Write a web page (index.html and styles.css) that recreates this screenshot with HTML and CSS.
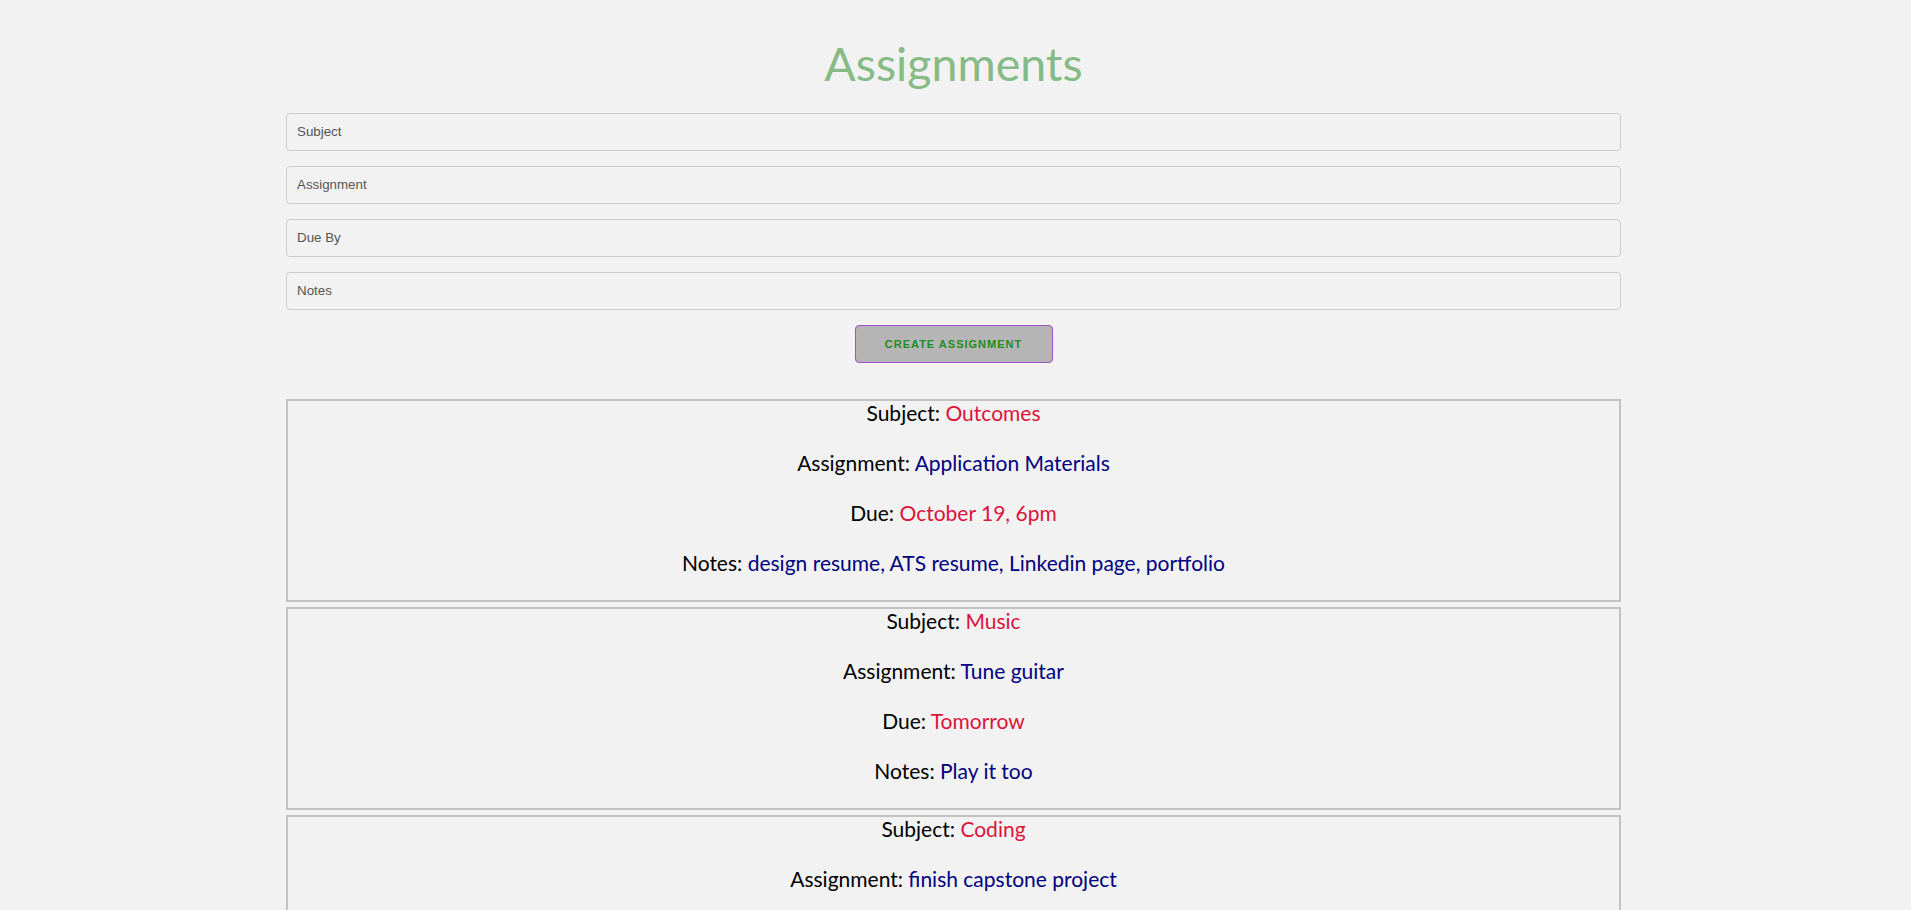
FILE: index.html
```html
<!DOCTYPE html>
<html lang="en">
<head>
<meta charset="utf-8">
<title>Assignments</title>
<link rel="stylesheet" href="styles.css">
</head>
<body>
<main class="page">
  <h1 class="title">Assignments</h1>
  <form class="form">
    <input class="field" type="text" placeholder="Subject">
    <input class="field" type="text" placeholder="Assignment">
    <input class="field" type="text" placeholder="Due By">
    <input class="field" type="text" placeholder="Notes">
    <button class="create" type="button">Create Assignment</button>
  </form>
  <section class="list">
    <div class="card">
      <p>Subject: <span class="red">Outcomes</span></p>
      <p>Assignment: <span class="blue">Application Materials</span></p>
      <p>Due: <span class="red">October 19, 6pm</span></p>
      <p>Notes: <span class="blue">design resume, ATS resume, Linkedin page, portfolio</span></p>
    </div>
    <div class="card">
      <p>Subject: <span class="red">Music</span></p>
      <p>Assignment: <span class="blue">Tune guitar</span></p>
      <p>Due: <span class="red">Tomorrow</span></p>
      <p>Notes: <span class="blue">Play it too</span></p>
    </div>
    <div class="card">
      <p>Subject: <span class="red">Coding</span></p>
      <p>Assignment: <span class="blue">finish capstone project</span></p>
      <p>Due: <span class="red">Friday</span></p>
      <p>Notes: <span class="blue">deploy it</span></p>
    </div>
  </section>
</main>
</body>
</html>
```

FILE: styles.css
```css
html, body {
  margin: 0;
  padding: 0;
  background: #f2f2f2;
}

body {
  padding-right: 4px;
  font-family: Lato, "Open Sans", sans-serif;
  color: #000;
}

.page {
  width: 1335px;
  margin: 0 auto;
}

.title {
  margin: 35px 0 20px;
  font-size: 46.5px;
  line-height: 57.6px;
  font-weight: 400;
  text-align: center;
  color: #86ba86;
}

.form {
  display: flex;
  flex-direction: column;
  gap: 15px;
}

.field {
  display: block;
  box-sizing: border-box;
  width: 100%;
  height: 38px;
  margin: 0;
  padding: 0 10px;
  border: 1px solid #cccccc;
  border-radius: 4px;
  background: #f2f2f2;
  font-family: "Liberation Sans", Arial, sans-serif;
  font-size: 13.33px;
  color: #333;
}

.field::placeholder {
  color: #555555;
}

.create {
  align-self: center;
  box-sizing: border-box;
  width: 198px;
  height: 38px;
  margin-top: 0;
  border: 1px solid #9a55cc;
  border-radius: 4px;
  background: #b5b5b5;
  color: #228b22;
  font-family: "Liberation Sans", Arial, sans-serif;
  font-size: 11px;
  font-weight: 700;
  letter-spacing: 1px;
  text-transform: uppercase;
}

.list {
  display: flex;
  flex-direction: column;
  gap: 5px;
  margin-top: 36px;
}

.card {
  border: 2px solid #c2c2c2;
  text-align: center;
}

.card p {
  margin: 0 0 26px;
  font-size: 21px;
  line-height: 24px;
}

.card p:last-child {
  margin-bottom: 25px;
}

.red {
  color: #dc143c;
}

.blue {
  color: #000080;
}
```
